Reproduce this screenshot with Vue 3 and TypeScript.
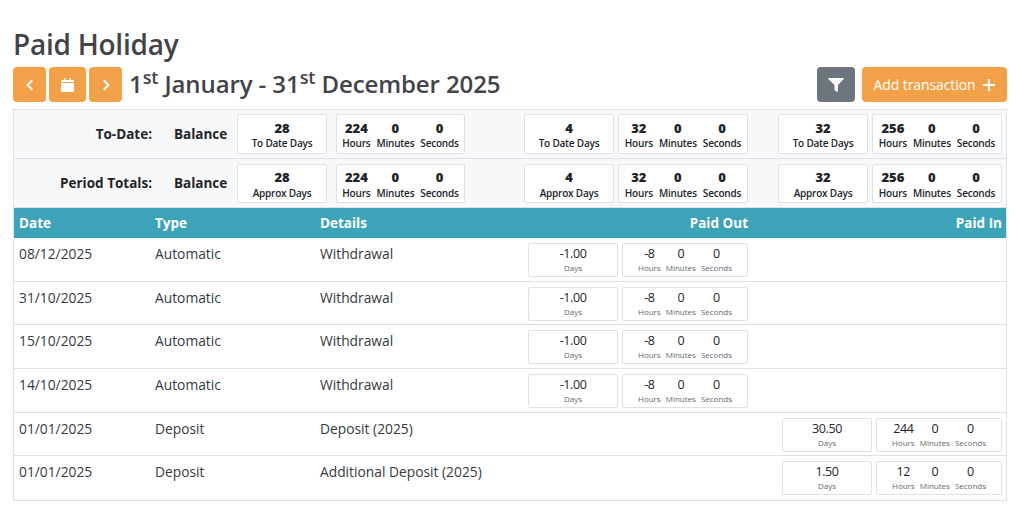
<template>
  <div class="page">
    <h1 class="title">Paid Holiday</h1>
    <div class="toolbar">
      <button class="btn btn--nav" aria-label="Previous">
        <svg width="8" height="12" viewBox="0 0 8 12"><path d="M6.2 1.2 1.6 6l4.6 4.8" fill="none" stroke="#fff" stroke-width="2" /></svg>
      </button>
      <button class="btn btn--cal" aria-label="Calendar">
        <svg width="13" height="14" viewBox="0 0 13 14"><path fill="#fff" d="M0 5h13v7.600c0 .8-.6 1.400-1.400 1.400H1.400C.6 14 0 13.400 0 12.600zM3 0h1.500v2h4V0H10v2h1.600c.8 0 1.400.6 1.400 1.400V4H0v-.6C0 2.600.6 2 1.400 2H3z" /></svg>
      </button>
      <button class="btn btn--nav" aria-label="Next">
        <svg width="8" height="12" viewBox="0 0 8 12"><path d="M1.800 1.200 6.400 6l-4.600 4.800" fill="none" stroke="#fff" stroke-width="2" /></svg>
      </button>
      <h2 class="period">1<sup>st</sup> January - 31<sup>st</sup> December 2025</h2>
      <button class="btn btn--filter" aria-label="Filter">
        <svg width="16" height="14" viewBox="0 0 16 14"><path fill="#fff" d="M.8 0h14.400c.6 0 .9.700.5 1.100L10 7v6.200c0 .6-.6.900-1.100.6L6.500 12V7L.3 1.100C-.1.700.2 0 .8 0z" /></svg>
      </button>
      <button class="btn btn--add">
        Add transaction
        <svg width="12" height="12" viewBox="0 0 12 12"><path d="M6 0v12M0 6h12" stroke="#fff" stroke-width="2.200" /></svg>
      </button>
    </div>

    <div class="ledger">
      <div v-for="row in totals" :key="row.label" class="summary">
        <div class="summary__label">{{ row.label }}</div>
        <div class="summary__balance">Balance</div>
        <div v-for="(group, i) in row.groups" :key="i" class="summary__group" :class="`summary__group--${i}`">
          <div class="box box--days">
            <div class="box__cell">
              <b>{{ group.days }}</b>
              <span>{{ row.daysLabel }}</span>
            </div>
          </div>
          <div class="box box--time">
            <div class="box__cell"><b>{{ group.hours }}</b><span>Hours</span></div>
            <div class="box__cell"><b>0</b><span>Minutes</span></div>
            <div class="box__cell"><b>0</b><span>Seconds</span></div>
          </div>
        </div>
      </div>

      <div class="head">
        <div class="col-date">Date</div>
        <div class="col-type">Type</div>
        <div class="col-details">Details</div>
        <div class="col-out">Paid Out</div>
        <div class="col-in">Paid In</div>
      </div>

      <div v-for="(tx, idx) in transactions" :key="idx" class="tx" :class="{ 'tx--short': tx.short }">
        <div class="col-date">{{ tx.date }}</div>
        <div class="col-type">{{ tx.type }}</div>
        <div class="col-details">{{ tx.details }}</div>
        <div class="col-out">
          <div v-if="tx.dir === 'out'" class="amount">
            <div class="box box--days box--light">
              <div class="box__cell"><em>{{ tx.days }}</em><small>Days</small></div>
            </div>
            <div class="box box--time box--light">
              <div class="box__cell"><em>{{ tx.hours }}</em><small>Hours</small></div>
              <div class="box__cell"><em>0</em><small>Minutes</small></div>
              <div class="box__cell"><em>0</em><small>Seconds</small></div>
            </div>
          </div>
        </div>
        <div class="col-in">
          <div v-if="tx.dir === 'in'" class="amount">
            <div class="box box--days box--light">
              <div class="box__cell"><em>{{ tx.days }}</em><small>Days</small></div>
            </div>
            <div class="box box--time box--light">
              <div class="box__cell"><em>{{ tx.hours }}</em><small>Hours</small></div>
              <div class="box__cell"><em>0</em><small>Minutes</small></div>
              <div class="box__cell"><em>0</em><small>Seconds</small></div>
            </div>
          </div>
        </div>
      </div>
    </div>
  </div>
</template>

<script setup lang="ts">
interface Transaction {
  date: string
  type: string
  details: string
  dir: 'in' | 'out'
  days: string
  hours: string
  short?: boolean
}

const totals = [
  {
    label: 'To-Date:',
    daysLabel: 'To Date Days',
    groups: [
      { days: '28', hours: '224' },
      { days: '4', hours: '32' },
      { days: '32', hours: '256' },
    ],
  },
  {
    label: 'Period Totals:',
    daysLabel: 'Approx Days',
    groups: [
      { days: '28', hours: '224' },
      { days: '4', hours: '32' },
      { days: '32', hours: '256' },
    ],
  },
]

const transactions: Transaction[] = [
  { date: '08/12/2025', type: 'Automatic', details: 'Withdrawal', dir: 'out', days: '-1.00', hours: '-8' },
  { date: '31/10/2025', type: 'Automatic', details: 'Withdrawal', dir: 'out', days: '-1.00', hours: '-8', short: true },
  { date: '15/10/2025', type: 'Automatic', details: 'Withdrawal', dir: 'out', days: '-1.00', hours: '-8' },
  { date: '14/10/2025', type: 'Automatic', details: 'Withdrawal', dir: 'out', days: '-1.00', hours: '-8' },
  { date: '01/01/2025', type: 'Deposit', details: 'Deposit (2025)', dir: 'in', days: '30.50', hours: '244', short: true },
  { date: '01/01/2025', type: 'Deposit', details: 'Additional Deposit (2025)', dir: 'in', days: '1.50', hours: '12' },
]
</script>

<style>
html,
body {
  margin: 0;
  background: #fff;
}
</style>

<style scoped>
.page {
  box-sizing: border-box;
  width: 1016px;
  height: 508px;
  padding: 24px 9px 0 13px;
  overflow: hidden;
  font-family: 'Open Sans', 'Noto Sans', sans-serif;
  font-size: 14px;
  color: #343a40;
}
.title {
  margin: 0;
  height: 43px;
  font-size: 28px;
  line-height: 40px;
  font-weight: 600;
  color: #42444a;
  letter-spacing: -0.25px;
}
.toolbar {
  display: flex;
  align-items: center;
  height: 35px;
  margin-bottom: 7px;
  gap: 3px;
}
.btn {
  display: flex;
  align-items: center;
  justify-content: center;
  height: 35px;
  padding: 0;
  border: 0;
  border-radius: 4px;
  background: #f3a149;
  color: #fff;
  font: inherit;
}
.btn--nav {
  width: 33px;
}
.btn--cal {
  width: 37px;
}
.period {
  flex: 1;
  height: 35px;
  margin: 0 0 0 4px;
  font-size: 24px;
  line-height: 33px;
  font-weight: 600;
  color: #42444a;
  letter-spacing: -0.1px;
}
.period sup {
  font-size: 18px;
  line-height: 0;
  vertical-align: baseline;
  position: relative;
  top: -9px;
}
.btn--filter {
  width: 38px;
  margin-right: 4px;
  background: #6c757d;
}
.btn--add {
  width: 145px;
  gap: 8px;
  font-size: 14px;
  letter-spacing: -0.1px;
}
.ledger {
  border: 1px solid #dee2e6;
  width: 992px;
}
.summary {
  display: flex;
  align-items: center;
  height: 48px;
  border-bottom: 1px solid #dee2e6;
  background: #f7f8fa;
  font-weight: 700;
  color: #212529;
}
.summary__label {
  width: 138px;
  text-align: right;
  font-size: 13.5px;
}
.summary__balance {
  width: 85px;
  padding-left: 22px;
  box-sizing: border-box;
  font-size: 13.5px;
}
.summary__group {
  display: flex;
  gap: 4px;
}
.summary__group--0 {
  gap: 9px;
}
.summary__group--0 .box--time {
  width: 129px;
}
.summary__group--1 {
  margin-left: 59px;
}
.summary__group--2 {
  margin-left: 30px;
}
.box {
  display: flex;
  box-sizing: border-box;
  height: 40px;
  border: 1px solid #dee2e6;
  border-radius: 2px;
  background: #fff;
  justify-content: center;
}
.summary:nth-child(2) .box {
  height: 39px;
}
.box--days {
  width: 90px;
}
.box--time {
  width: 130px;
  gap: 6px;
}
.box__cell {
  display: flex;
  flex-direction: column;
  align-items: center;
  padding-top: 4px;
}
.summary:nth-child(2) .box__cell {
  padding-top: 3px;
}
.summary:nth-child(2) .box__cell span {
  margin-top: 1px;
}
.box__cell b {
  font-size: 13px;
  line-height: 18px;
}
.box__cell span {
  font-size: 10px;
  line-height: 13px;
  font-weight: 600;
  letter-spacing: -0.2px;
}
.box--light {
  height: 34px;
}
.box--light.box--time {
  width: 126px;
  gap: 5px;
}
.box--light .box__cell {
  padding-top: 2px;
}
.box__cell em {
  font-style: normal;
  font-size: 12.5px;
  line-height: 16px;
  color: #212529;
  letter-spacing: -0.4px;
}
.box__cell small {
  font-size: 8px;
  line-height: 11px;
  color: #5f6870;
}
.head,
.tx {
  display: grid;
  grid-template-columns: 141px 165px 208px 225px 253px;
  box-sizing: border-box;
}
.head {
  height: 30px;
  align-items: center;
  background: #3da3b8;
  color: #fff;
  font-weight: 700;
  font-size: 13.5px;
}
.tx {
  height: 44px;
  padding-top: 4px;
  border-bottom: 1px solid #dee2e6;
  color: #343a40;
  font-size: 13.8px;
  line-height: 24px;
}
.tx--short {
  height: 43px;
}
.tx:last-child {
  border-bottom: 0;
}
.col-date {
  padding-left: 5px;
}
.col-out,
.col-in {
  display: flex;
  justify-content: flex-end;
  padding-right: 5px;
}
.col-in {
  padding-right: 4px;
}
.amount {
  display: flex;
  gap: 4px;
  align-items: flex-start;
  margin-top: 1px;
}
</style>
